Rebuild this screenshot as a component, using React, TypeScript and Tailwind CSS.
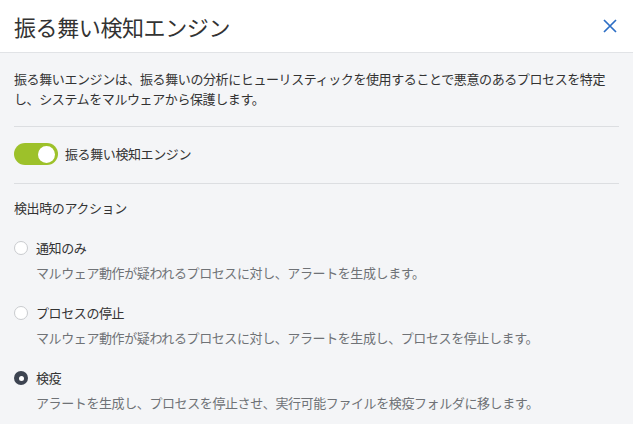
const options = [
  {
    label: "通知のみ",
    desc: "マルウェア動作が疑われるプロセスに対し、アラートを生成します。",
    checked: false,
  },
  {
    label: "プロセスの停止",
    desc: "マルウェア動作が疑われるプロセスに対し、アラートを生成し、プロセスを停止します。",
    checked: false,
  },
  {
    label: "検疫",
    desc: "アラートを生成し、プロセスを停止させ、実行可能ファイルを検疫フォルダに移します。",
    checked: true,
  },
];

const Radio = ({ checked }: { checked: boolean }) =>
  checked ? (
    <span className="flex h-[14px] w-[14px] shrink-0 items-center justify-center rounded-full bg-[#3d4451]">
      <span className="h-[5px] w-[5px] rounded-full bg-white" />
    </span>
  ) : (
    <span className="h-[14px] w-[14px] shrink-0 rounded-full border-[1.5px] border-[#c9cbce] bg-white" />
  );

export default function App() {
  return (
    <div
      className="h-[424px] w-[633px] overflow-hidden bg-[#f4f5f7] text-[#333]"
      style={{ fontFamily: '"Noto Sans CJK JP", "Noto Sans", sans-serif' }}
    >
      {/* Header */}
      <div className="flex h-[53px] items-center justify-between border-b border-[#e1e3e6] bg-white pl-[14px] pr-[16px]">
        <h1 className="text-[22px] leading-none tracking-[-0.4px] text-[#333]">
          振る舞い検知エンジン
        </h1>
        <button className="text-[#2c6ec5]">
          <svg width="14" height="14" viewBox="0 0 14 14" fill="none">
            <path d="M1 1L13 13M13 1L1 13" stroke="currentColor" strokeWidth="1.7" />
          </svg>
        </button>
      </div>

      {/* Body */}
      <div className="px-[14px] pt-[16px] text-[13px] leading-[20px] tracking-[-0.4px]">
        <p>
          振る舞いエンジンは、振る舞いの分析にヒューリスティックを使用することで悪意のあるプロセスを特定し、システムをマルウェアから保護します。
        </p>

        <div className="mt-[17px] border-t border-[#dcdee1]" />

        <div className="flex items-center gap-[7px] pt-[16px] pb-[18px]">
          <span className="flex h-[22px] w-[44px] items-center justify-end rounded-full bg-[#9dc12a] pr-[3px]">
            <span className="h-[17px] w-[17px] rounded-full bg-white" />
          </span>
          <span>振る舞い検知エンジン</span>
        </div>

        <div className="border-t border-[#dcdee1]" />

        <div className="mt-[14px]">検出時のアクション</div>

        <div className="mt-[20px] flex flex-col gap-5">
          {options.map((o) => (
            <div key={o.label}>
              <div className="flex items-center gap-2">
                <Radio checked={o.checked} />
                <span>{o.label}</span>
              </div>
              <div className="mt-[5px] pl-[22px] text-[#6f7276]">{o.desc}</div>
            </div>
          ))}
        </div>
      </div>
    </div>
  );
}
